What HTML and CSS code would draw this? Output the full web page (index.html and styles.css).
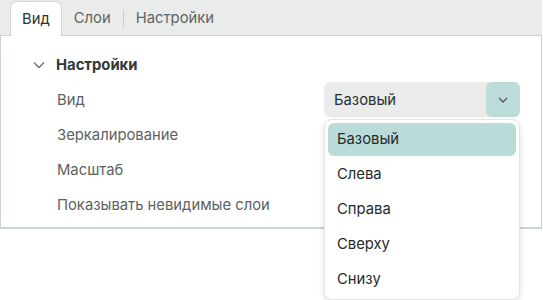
FILE: index.html
```html
<!DOCTYPE html>
<html lang="ru">
<head>
<meta charset="utf-8">
<link rel="stylesheet" href="styles.css">
</head>
<body>
<div class="tabs">
  <div class="tab active">Вид</div>
  <div class="tab">Слои</div>
  <div class="sep"></div>
  <div class="tab">Настройки</div>
</div>
<div class="panel">
  <div class="row heading">
    <svg class="chev" width="12" height="8" viewBox="0 0 12 8"><path d="M1 1.5 L6 6.5 L11 1.5" fill="none" stroke="#6b7473" stroke-width="1.4"/></svg>
    <span>Настройки</span>
  </div>
  <div class="row prop">
    <span class="label">Вид</span>
    <div class="select">
      <span class="value">Базовый</span>
      <span class="btn"><svg width="10" height="6" viewBox="0 0 10 6"><path d="M1 1 L5 5 L9 1" fill="none" stroke="#555" stroke-width="1.3"/></svg></span>
    </div>
  </div>
  <div class="row prop"><span class="label">Зеркалирование</span></div>
  <div class="row prop"><span class="label">Масштаб</span></div>
  <div class="row prop"><span class="label">Показывать невидимые слои</span></div>
</div>
<ul class="menu">
  <li class="item selected">Базовый</li>
  <li class="item">Слева</li>
  <li class="item">Справа</li>
  <li class="item">Сверху</li>
  <li class="item">Снизу</li>
</ul>
</body>
</html>
```
FILE: styles.css
```css
html, body {
  margin: 0;
  padding: 0;
  background: #fff;
  font-family: Inter, "Noto Sans", sans-serif;
  font-size: 14.8px;
}
.tabs {
  height: 36px;
  background: #eaeceb;
  display: flex;
  align-items: flex-end;
  padding-left: 10px;
  border-bottom: 1px solid #c9d5d4;
  box-sizing: border-box;
  width: 542px;
  position: relative;
}
.tab {
  height: 34px;
  line-height: 35px;
  padding: 0 12px;
  color: #5f6463;
  box-sizing: border-box;
}
.tab.active {
  background: #fff;
  color: #2e3332;
  border: 1px solid #d0dad9;
  border-bottom: none;
  border-radius: 7px 7px 0 0;
  height: 35px;
  margin-bottom: -1px;
  padding: 0 11px;
}
.sep {
  width: 1px;
  height: 16px;
  background: #c4cccb;
  align-self: center;
  margin-top: 3px;
}
.panel {
  width: 542px;
  box-sizing: border-box;
  border-left: 1px solid #c9d5d4;
  border-right: 1px solid #c9d5d4;
  border-bottom: 2px solid #c9d5d4;
  padding: 11px 0 5px 0;
}
.row {
  height: 35px;
  display: flex;
  align-items: center;
}
.heading {
  padding-left: 32px;
  font-weight: 700;
  color: #333836;
}
.chev {
  margin-right: 11px;
}
.prop {
  padding-left: 56px;
  color: #5d6261;
}
.label {
  flex: 1;
}
.select {
  width: 196px;
  height: 35px;
  margin-right: 21px;
  background: #e9ecea;
  border-radius: 6px;
  display: flex;
  align-items: center;
  box-sizing: border-box;
}
.value {
  flex: 1;
  padding-left: 10px;
  color: #2c302f;
}
.btn {
  width: 34px;
  height: 35px;
  background: #bcdcda;
  border-radius: 6px;
  display: flex;
  align-items: center;
  justify-content: center;
}
.menu {
  position: absolute;
  left: 324px;
  top: 119px;
  width: 196px;
  box-sizing: border-box;
  margin: 0;
  padding: 3px;
  list-style: none;
  background: #fff;
  border: 1px solid #e3e6e5;
  border-radius: 8px;
  box-shadow: 0 2px 6px rgba(0,0,0,0.12);
  display: flex;
  flex-direction: column;
  gap: 2px;
}
.item {
  height: 33px;
  line-height: 33px;
  padding-left: 9px;
  color: #262a29;
  border-radius: 6px;
}
.item.selected {
  background: #badcd9;
}
```
